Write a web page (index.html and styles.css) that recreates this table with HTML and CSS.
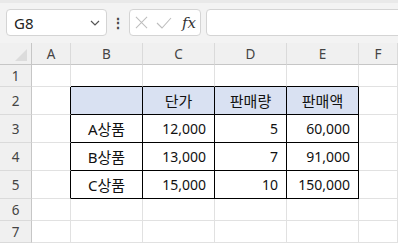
FILE: index.html
```html
<!DOCTYPE html>
<html lang="ko">
<head>
  <meta charset="UTF-8" />
  <title>판매 현황</title>
  <link rel="stylesheet" href="styles.css">
</head>
<body>

<!-- formula bar -->
<div class="toolbar">
  <div class="name-box">
    <span>G8</span>
    <svg class="chevron" viewBox="0 0 10 6"><path d="M1 1l4 4 4-4" /></svg>
  </div>
  <div class="more-dots">⋮</div>
  <div class="fx-group">
    <svg class="fx-icon" viewBox="0 0 14 14"><path d="M1 1l12 12M13 1L1 13" /></svg>
    <svg class="fx-icon check" viewBox="0 0 16 12"><path d="M1 6l5 5 9-10" /></svg>
    <span class="fx-label">fx</span>
  </div>
  <div class="formula-input"></div>
</div>

<!-- sheet -->
<div class="sheet" id="sheet"></div>

<script>
  const cols = ["A", "B", "C", "D", "E", "F"];
  const data = {
    2: ["", "", "단가", "판매량", "판매액"],
    3: ["", "A상품", "12,000", "5", "60,000"],
    4: ["", "B상품", "13,000", "7", "91,000"],
    5: ["", "C상품", "15,000", "10", "150,000"]
  };

  const sheet = document.getElementById("sheet");

  function cell(cls, text) {
    const el = document.createElement("div");
    el.className = cls;
    if (text) el.textContent = text;
    sheet.appendChild(el);
    return el;
  }

  // header row
  cell("corner");
  cols.forEach(c => cell("col-head", c));

  for (let r = 1; r <= 7; r++) {
    cell("row-head", r);
    cols.forEach((c, i) => {
      const row = data[r];
      const text = row && i < 5 ? row[i] : "";
      let cls = "cell";
      const inTable = r >= 2 && r <= 5 && i >= 1 && i <= 4;
      if (inTable) {
        cls += " boxed";
        if (r === 2) cls += " head-fill center";
        else if (i === 1) cls += " center";
        else cls += " num";
      }
      // outer edge of the table sits on the neighbouring cells
      if (r >= 2 && r <= 5 && i === 0) cls += " edge-right";
      if (r === 1 && i >= 1 && i <= 4) cls += " edge-bottom";
      cell(cls, text);
    });
  }
</script>

</body>
</html>
```

FILE: styles.css
```css
* {
  box-sizing: border-box;
}

body {
  margin: 0;
  width: 398px;
  height: 244px;
  overflow: hidden;
  background: #fff;
  font-family: "Noto Sans", "Noto Sans CJK KR", sans-serif;
}

/* formula bar */
.toolbar {
  height: 43px;
  background: #f3f3f3;
  border-top: 3px solid #e9e9e9;
  display: flex;
  align-items: flex-start;
  padding: 6px 0 0 6px;
}

.name-box {
  width: 101px;
  height: 27px;
  background: #fff;
  border: 1px solid #d4d4d4;
  border-radius: 4px;
  display: flex;
  align-items: center;
  justify-content: space-between;
  padding: 0 6px 0 7px;
  font-size: 15px;
  color: #222;
}

.chevron {
  width: 10px;
  height: 6px;
  fill: none;
  stroke: #555;
  stroke-width: 1.2;
}

.more-dots {
  width: 22px;
  text-align: center;
  font-size: 14px;
  font-weight: bold;
  line-height: 27px;
  color: #444;
}

.fx-group {
  width: 72px;
  height: 27px;
  background: #fff;
  border: 1px solid #d4d4d4;
  border-radius: 4px;
  display: flex;
  align-items: center;
  padding: 0 4px 0 5px;
  gap: 8px;
}

.fx-icon {
  width: 13px;
  height: 13px;
  fill: none;
  stroke: #bdbdbd;
  stroke-width: 1.1;
}

.fx-icon.check {
  width: 16px;
  height: 12px;
}

.fx-label {
  font-family: "DejaVu Serif", "Liberation Serif", serif;
  font-style: italic;
  font-size: 15px;
  color: #333;
  margin-left: 2px;
}

.formula-input {
  flex: 1;
  height: 27px;
  margin-left: 5px;
  margin-right: -6px;
  background: #fff;
  border: 1px solid #d4d4d4;
  border-radius: 4px;
}

/* sheet grid */
.sheet {
  display: grid;
  grid-template-columns: 32px 39px 72px 72px 72px 72px 1fr;
  grid-template-rows: 22px 22px 28px 28px 28px 28px 22px 22px;
  font-size: 14px;
  color: #111;
}

.corner,
.col-head,
.row-head {
  background: #f0f0f0;
  color: #444;
  font-size: 13.5px;
  display: flex;
  align-items: center;
  justify-content: center;
}

.corner {
  border-right: 1px solid #c6c6c6;
  border-bottom: 1px solid #c6c6c6;
  position: relative;
}

/* select-all triangle */
.corner::after {
  content: "";
  position: absolute;
  right: 4px;
  bottom: 3px;
  border-left: 12px solid transparent;
  border-bottom: 12px solid #dcdcdc;
}

.col-head {
  border-right: 1px solid #dadada;
  border-bottom: 1px solid #c6c6c6;
}

.row-head {
  border-right: 1px solid #c6c6c6;
  border-bottom: 1px solid #dadada;
}

.cell {
  border-right: 1px solid #e1e1e1;
  border-bottom: 1px solid #e1e1e1;
  display: flex;
  align-items: center;
  padding: 0 8px;
  white-space: nowrap;
}

.cell.boxed {
  border-right-color: #000;
  border-bottom-color: #000;
}

.cell.edge-right {
  border-right-color: #000;
}

.cell.edge-bottom {
  border-bottom-color: #000;
}

.cell.head-fill {
  background: #d9e1f2;
}

.cell.center {
  justify-content: center;
  font-size: 15px;
}

.cell.num {
  justify-content: flex-end;
}
```
